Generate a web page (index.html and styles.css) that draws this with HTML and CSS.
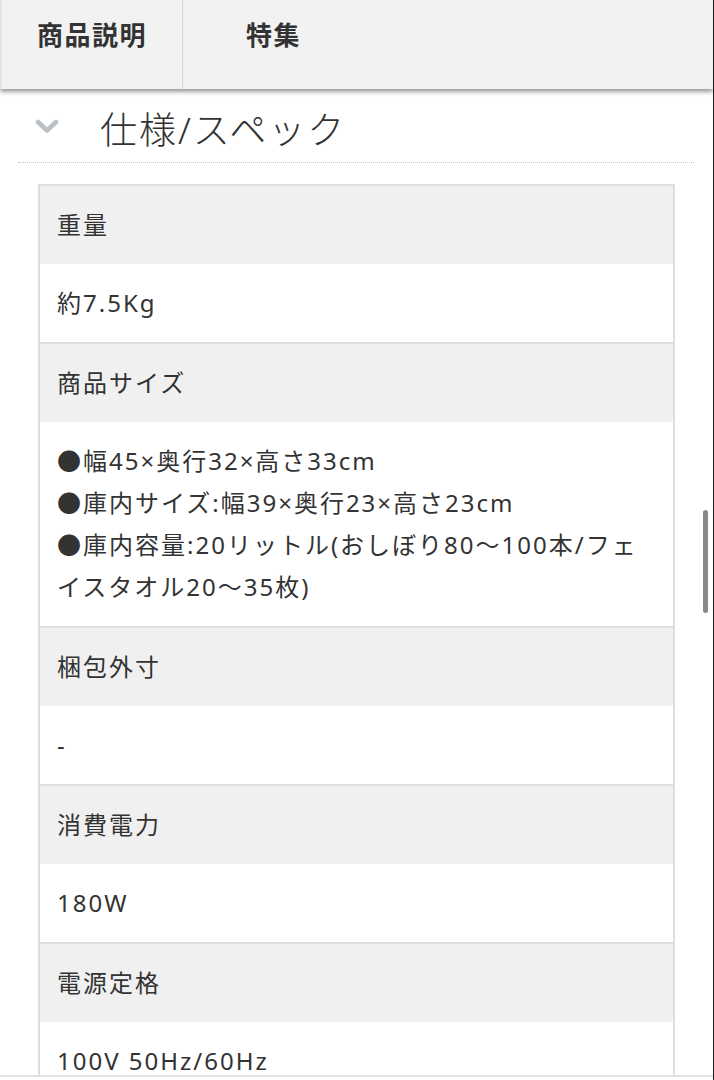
FILE: index.html
```html
<!DOCTYPE html>
<html lang="ja">
<head>
<meta charset="utf-8">
<link rel="stylesheet" href="styles.css">
</head>
<body>
<div class="page">
  <div class="viewport">
    <nav class="tabs">
      <div class="tab tab-active">商品説明</div>
      <div class="tab">特集</div>
    </nav>
    <section class="spec">
      <h2 class="spec-head">
        <svg class="chev" width="24" height="15" viewBox="0 0 24 15"><path d="M3 3 L12 11.5 L21 3" fill="none" stroke="#b9c0c7" stroke-width="4.5" stroke-linecap="round" stroke-linejoin="round"/></svg>
        <span class="spec-title">仕様/スペック</span>
      </h2>
      <div class="table">
        <div class="th">重量</div>
        <div class="td">約7.5Kg</div>
        <div class="th">商品サイズ</div>
        <div class="td">●幅45×奥行32×高さ33cm<br>●庫内サイズ:幅39×奥行23×高さ23cm<br>●庫内容量:20リットル(おしぼり80〜100本/フェイスタオル20〜35枚)</div>
        <div class="th">梱包外寸</div>
        <div class="td">-</div>
        <div class="th">消費電力</div>
        <div class="td">180W</div>
        <div class="th">電源定格</div>
        <div class="td">100V 50Hz/60Hz</div>
      </div>
    </section>
    <div class="scrollbar"></div>
  </div>
</div>
</body>
</html>
```
FILE: styles.css
```css
html, body {
  margin: 0;
  padding: 0;
  background: #fff;
}
body {
  font-family: "Noto Sans", "Noto Sans CJK JP", sans-serif;
  color: #333;
}
.page {
  width: 713px;
  height: 1080px;
  border-right: 1px solid #1a1a1a;
  overflow: hidden;
}
.viewport {
  position: relative;
  height: 1075px;
  overflow: hidden;
  border-bottom: 2px solid #e2e2e2;
}
.tabs {
  display: flex;
  height: 89px;
  background: #f2f2f2;
  box-shadow: 0 3px 4px rgba(0, 0, 0, 0.38);
  position: relative;
  z-index: 1;
}
.tab {
  width: 181px;
  padding-top: 14px;
  box-sizing: border-box;
  text-align: center;
  font-family: "Noto Sans CJK JP", sans-serif;
  font-size: 26px;
  font-weight: 700;
  line-height: 40px;
  letter-spacing: 1.5px;
  color: #333;
}
.tab-active {
  border-left: 2px solid #e4e4e4;
  border-right: 1px solid #d6d6d6;
  width: 183px;
}
.spec {
  padding: 0 19px 0 18px;
}
.spec-head {
  margin: 0;
  display: flex;
  align-items: center;
  height: 73px;
  border-bottom: 1px dotted #c4c4c4;
  font-weight: 300;
}
.chev {
  margin-left: 17px;
  margin-top: 2px;
}
.spec-title {
  margin-left: 41px;
  font-size: 37px;
  line-height: 50px;
  letter-spacing: 2px;
  color: #333;
  font-weight: 300;
  margin-top: 8px;
}
.table {
  margin: 21px 19px 0 20px;
  border: 2px solid #dedede;
  border-bottom: none;
}
.th, .td {
  font-size: 24px;
  line-height: 42px;
  letter-spacing: 2px;
  padding: 18px 17px;
}
.th {
  background: #f0f0f0;
}
.td {
  background: #fff;
  border-bottom: 2px solid #dedede;
}
.scrollbar {
  position: absolute;
  left: 703px;
  top: 510px;
  width: 5px;
  height: 103px;
  border-radius: 3px;
  background: #8a8a8a;
}
```
